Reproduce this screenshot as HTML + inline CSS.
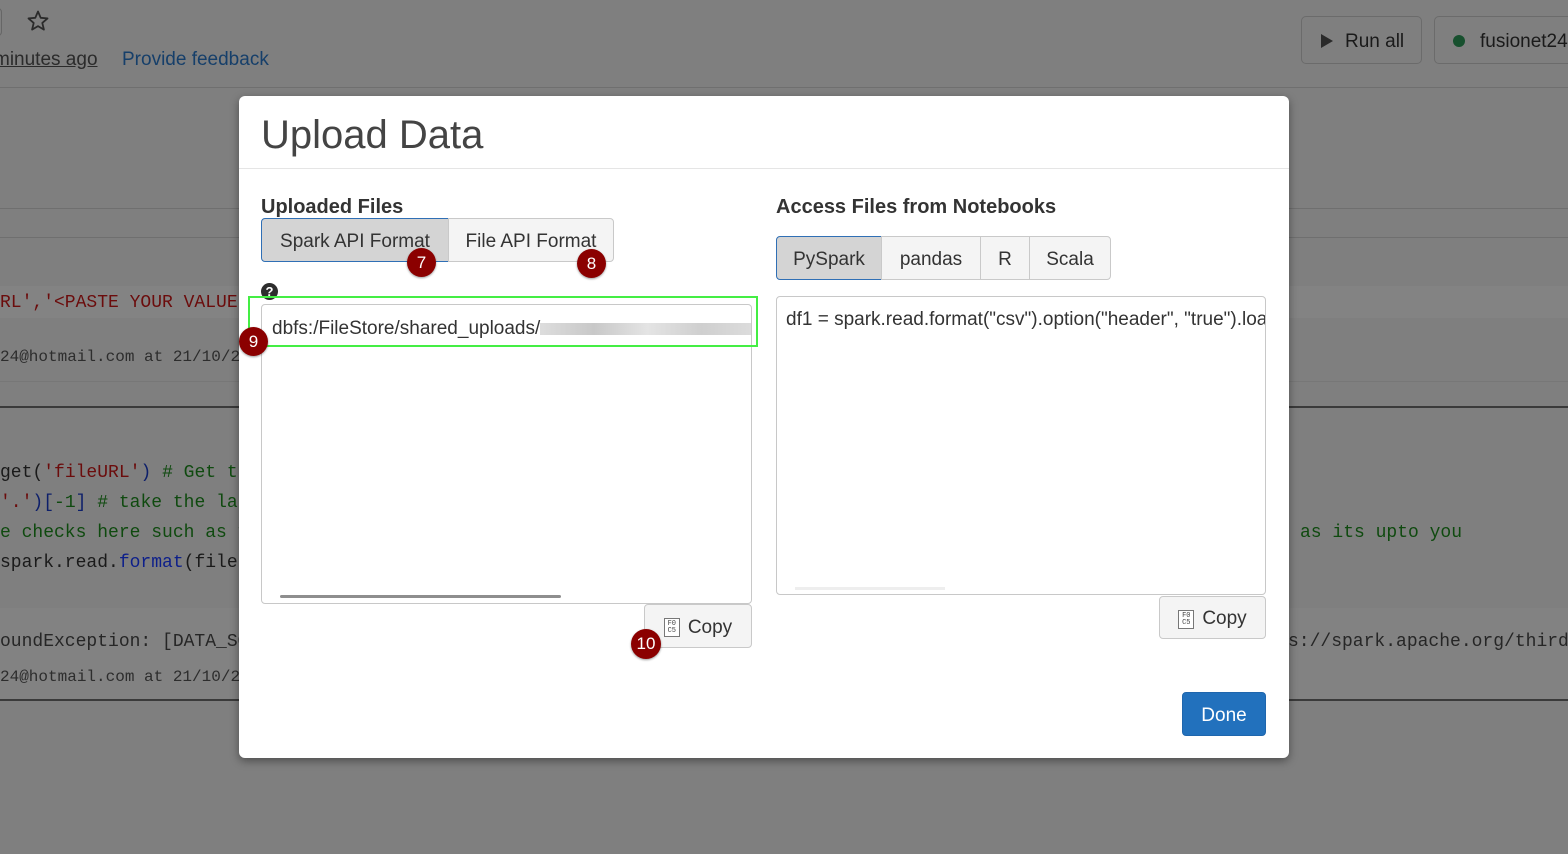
<!DOCTYPE html>
<html><head><meta charset="utf-8"><style>
*{box-sizing:border-box;margin:0;padding:0}
body{width:1568px;height:854px;background:#7f7f7f;position:relative;overflow:hidden;font-family:"Liberation Sans",sans-serif;color:#222}
.a{position:absolute}
.mono{font-family:"Liberation Mono",monospace;font-size:18px;white-space:nowrap}
.hl{height:1px;background:#6f6f6f;left:0;right:0}
.btn{position:absolute;border:1px solid #c9c9c9;background:#f4f4f4;border-radius:4px;font-size:19px;color:#333;display:flex;align-items:center;justify-content:center;padding-top:3px}
.badge{position:absolute;width:29px;height:29px;border-radius:50%;background:#8b0000;color:#fff;font-size:17px;display:flex;align-items:center;justify-content:center;box-shadow:0 1px 2px rgba(0,0,0,.4)}
.ico{display:inline-block;width:16px;height:19px;border:1px solid #777;font-family:"Liberation Mono",monospace;font-size:7px;line-height:7px;text-align:center;padding-top:2px;margin-right:8px;color:#444;background:#fff}
</style></head><body>
<div class="a" style="left:-8px;top:8px;width:10px;height:28px;border:1px solid #666;border-radius:4px"></div>
<svg class="a" style="left:26px;top:9px" width="24" height="24" viewBox="0 0 24 24"><path d="M12 2.5l2.7 6.3 6.8.6-5.2 4.5 1.6 6.7L12 17.1 6.1 20.6l1.6-6.7L2.5 9.4l6.8-.6z" fill="none" stroke="#2a2a2a" stroke-width="1.8" stroke-linejoin="round"/></svg>
<div class="a" style="left:-6px;top:49px;font-size:19px;color:#2b2b2b;text-decoration:underline">minutes ago</div>
<div class="a" style="left:122px;top:49px;font-size:19px;color:#163f6a">Provide feedback</div>
<div class="a" style="left:1301px;top:16px;width:121px;height:48px;border:1px solid #6b6b6b;border-radius:5px"></div>
<svg class="a" style="left:1321px;top:34px" width="12" height="14"><path d="M0 0L12 7 0 14z" fill="#2a2a2a"/></svg>
<div class="a" style="left:1345px;top:31px;font-size:19px;color:#1a1a1a">Run all</div>
<div class="a" style="left:1434px;top:16px;width:160px;height:48px;border:1px solid #6b6b6b;border-radius:5px"></div>
<div class="a" style="left:1453px;top:35px;width:12px;height:12px;border-radius:50%;background:#17502e"></div>
<div class="a" style="left:1480px;top:31px;font-size:19px;color:#1a1a1a">fusionet24</div>
<div class="a hl" style="top:87px"></div>
<div class="a hl" style="top:208px"></div>
<div class="a hl" style="top:237px"></div>
<div class="a" style="left:0;right:0;top:286px;height:32px;background:#838383"></div>
<div class="a mono" style="left:0;top:293px;color:#6b0c0c">RL','&lt;PASTE YOUR VALUE</div>
<div class="a mono" style="left:0;top:348px;font-size:16px;color:#2d2d2d">24@hotmail.com at 21/10/2023</div>
<div class="a hl" style="top:381px;background:#777"></div>
<div class="a" style="left:0;right:0;top:406px;height:2px;background:#3a3a3a"></div>
<div class="a mono" style="left:0;top:463px"><span style="color:#1a1a1a">get(</span><span style="color:#6b0c0c">'fileURL'</span><span style="color:#0d1f6a">)</span> <span style="color:#0f4a0f">#&nbsp;Get the</span></div>
<div class="a mono" style="left:0;top:493px"><span style="color:#6b0c0c">'.'</span><span style="color:#0d1f6a">)[</span><span style="color:#0f4a0f">-1</span><span style="color:#0d1f6a">]</span> <span style="color:#0f4a0f">#&nbsp;take the la</span></div>
<div class="a mono" style="left:0;top:523px;color:#0f4a0f">e checks here such as f</div>
<div class="a mono" style="left:1300px;top:523px;color:#0f4a0f">as its upto you</div>
<div class="a mono" style="left:0;top:553px"><span style="color:#1a1a1a">spark.read.</span><span style="color:#0d1f8a">format</span><span style="color:#1a1a1a">(fileF</span></div>
<div class="a" style="left:0;right:0;top:608px;height:92px;background:#828282"></div>
<div class="a mono" style="left:0;top:632px;color:#262626">oundException: [DATA_SO</div>
<div class="a mono" style="left:1288px;top:632px;color:#262626">s://spark.apache.org/third</div>
<div class="a mono" style="left:0;top:668px;font-size:16px;color:#2d2d2d">24@hotmail.com at 21/10/2023</div>
<div class="a" style="left:0;right:0;top:699px;height:2px;background:#3a3a3a"></div>

<div class="a" style="left:239px;top:96px;width:1050px;height:662px;background:#fff;border-radius:6px;box-shadow:0 3px 9px rgba(0,0,0,.4)"></div>
<div class="a" style="left:261px;top:113px;font-size:40px;font-weight:300;color:#444">Upload Data</div>
<div class="a" style="left:239px;width:1050px;top:168px;height:1px;background:#e5e5e5"></div>

<div class="a" style="left:261px;top:196px;font-size:20px;font-weight:bold;color:#333">Uploaded Files</div>
<div class="btn" style="left:261px;top:218px;width:188px;height:44px;background:#d4d4d4;border-color:#2f6fb5;border-radius:4px 0 0 4px">Spark API Format</div>
<div class="btn" style="left:448px;top:218px;width:166px;height:44px;border-radius:0 4px 4px 0">File API Format</div>
<div class="a" style="left:261px;top:283px;width:17px;height:17px;border-radius:50%;background:#2d2d2d;color:#fff;font-size:13px;font-weight:bold;text-align:center;line-height:17px">?</div>
<div class="a" style="left:261px;top:304px;width:491px;height:300px;border:1px solid #c8c8c8;border-radius:4px;overflow:hidden">
  <div style="position:absolute;left:10px;top:13px;font-size:19px;color:#333;white-space:nowrap">dbfs:/FileStore/shared_uploads/<span style="display:inline-block;width:215px;height:12px;background:linear-gradient(90deg,#ddd,#c8c8c8,#e4e4e4,#cfcfcf,#ddd);vertical-align:middle"></span></div>
  <div style="position:absolute;left:18px;top:290px;width:281px;height:3px;background:#8e8e8e;border-radius:2px"></div>
</div>
<div class="a" style="left:248px;top:296px;width:510px;height:51px;border:2px solid #44ee44"></div>
<div class="btn" style="left:644px;top:604px;width:108px;height:44px"><span class="ico">F0<br>C5</span>Copy</div>

<div class="a" style="left:776px;top:196px;font-size:20px;font-weight:bold;color:#333">Access Files from Notebooks</div>
<div class="btn" style="left:776px;top:236px;width:106px;height:44px;background:#d4d4d4;border-color:#2f6fb5;border-radius:4px 0 0 4px">PySpark</div>
<div class="btn" style="left:881px;top:236px;width:100px;height:44px;border-radius:0">pandas</div>
<div class="btn" style="left:980px;top:236px;width:50px;height:44px;border-radius:0">R</div>
<div class="btn" style="left:1029px;top:236px;width:82px;height:44px;border-radius:0 4px 4px 0">Scala</div>
<div class="a" style="left:776px;top:296px;width:490px;height:299px;border:1px solid #c8c8c8;border-radius:4px;overflow:hidden">
  <div style="position:absolute;left:9px;top:12px;font-size:19px;color:#333;white-space:nowrap">df1 = spark.read.format("csv").option("header", "true").load</div>
  <div style="position:absolute;left:18px;top:290px;width:150px;height:3px;background:#eee"></div>
</div>
<div class="btn" style="left:1159px;top:596px;width:107px;height:43px"><span class="ico">F0<br>C5</span>Copy</div>
<div class="btn" style="left:1182px;top:692px;width:84px;height:44px;background:#2271bd;border-color:#1f66ad;color:#fff">Done</div>

<div class="badge" style="left:407px;top:248px">7</div>
<div class="badge" style="left:577px;top:249px">8</div>
<div class="badge" style="left:239px;top:327px">9</div>
<div class="badge" style="left:631px;top:629px;width:30px;height:30px">10</div>
</body></html>
